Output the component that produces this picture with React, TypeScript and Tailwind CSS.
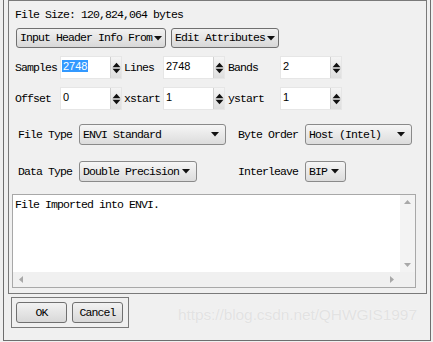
import React from "react";

const mono = { fontFamily: '"Liberation Mono", "DejaVu Sans Mono", monospace' };

function Caret() {
  return (
    <svg width="8" height="5" viewBox="0 0 8 5" className="shrink-0">
      <polygon points="0,0 8,0 4,4.5" fill="#111" />
    </svg>
  );
}

function Spin() {
  return (
    <div className="w-[11px] h-full flex items-center justify-center bg-gradient-to-b from-[#f4f4f4] to-[#dedede] border-l border-[#d0d0d0]">
      <svg width="9" height="12" viewBox="0 0 9 12">
        <polygon points="0.5,5.3 4.5,0.8 8.5,5.3" fill="#111" />
        <polygon points="0.5,6.7 4.5,11.2 8.5,6.7" fill="#111" />
      </svg>
    </div>
  );
}

function NumField({ value, selected }: { value: string; selected?: boolean }) {
  return (
    <div className="w-[62px] h-[23px] flex bg-white border border-[#e6e6e6]">
      <div
        className="flex-1 pl-[1px] pt-[3px] text-[11px] leading-[13px] text-black"
        style={{ fontFamily: '"Liberation Sans", Arial, sans-serif' }}
      >
        <span className={selected ? "bg-[#3399ff] text-white px-[1px]" : "px-[1px]"}>{value}</span>
      </div>
      <Spin />
    </div>
  );
}

function Select({ value, w }: { value: string; w: string }) {
  return (
    <div
      className={`${w} h-[21px] flex items-center justify-between pl-[3px] pr-[6px] rounded-[3px] border border-[#8a8a8a] bg-gradient-to-b from-[#f6f6f6] to-[#dcdcdc]`}
    >
      <span className="text-[11.5px] tracking-[-0.9px] text-black whitespace-nowrap">{value}</span>
      <Caret />
    </div>
  );
}

function Label({ text, w, pl = "" }: { text: string; w: string; pl?: string }) {
  return (
    <div className={`${w} ${pl} shrink-0 text-[11.5px] tracking-[-0.9px] text-black whitespace-nowrap`}>{text}</div>
  );
}

function Btn({ children, w }: { children: React.ReactNode; w: string }) {
  return (
    <div
      className={`${w} h-[20px] flex items-center justify-center gap-[2px] rounded-[3px] border border-[#707070] bg-gradient-to-b from-[#f2f2f2] to-[#d8d8d8] text-[11.5px] tracking-[-0.9px] text-black whitespace-nowrap`}
    >
      {children}
    </div>
  );
}

export default function App() {
  return (
    <div className="relative w-[433px] h-[342px] overflow-hidden bg-[#f0f0f0] pl-[3px]" style={mono}>
      <div className="w-[428px] h-[341px] border-l border-r border-b border-[#6e6e6e] pl-[4px]">
        {/* main frame */}
        <div className="w-[419px] h-[294px] border border-[#7a7a7a] flex flex-col">
          <div className="mt-[6px] h-[15px] leading-[15px] pl-[6px] text-[11.5px] tracking-[-0.9px] text-black">
            File Size: 120,824,064 bytes
          </div>

          <div className="mt-[6px] flex gap-[5px] pl-[7px]">
            <Btn w="w-[150px]">
              Input Header Info From
              <Caret />
            </Btn>
            <Btn w="w-[108px]">
              Edit Attributes
              <Caret />
            </Btn>
          </div>

          <div className="mt-[8px] flex items-center pl-[6px] h-[23px]">
            <Label text="Samples" w="w-[45px]" />
            <NumField value="2748" selected />
            <Label text="Lines" w="w-[41px]" pl="pl-[2px]" />
            <NumField value="2748" />
            <Label text="Bands" w="w-[55px]" pl="pl-[3px]" />
            <NumField value="2" />
          </div>

          <div className="mt-[8px] flex items-center pl-[6px] h-[23px]">
            <Label text="Offset" w="w-[45px]" />
            <NumField value="0" />
            <Label text="xstart" w="w-[41px]" pl="pl-[2px]" />
            <NumField value="1" />
            <Label text="ystart" w="w-[55px]" pl="pl-[3px]" />
            <NumField value="1" />
          </div>

          <div className="mt-[14px] flex items-center pl-[9px]">
            <Label text="File Type" w="w-[61px]" />
            <Select value="ENVI Standard" w="w-[147px]" />
            <Label text="Byte Order" w="w-[67px]" pl="pl-[12px] box-content" />
            <Select value="Host (Intel)" w="w-[107px]" />
          </div>

          <div className="mt-[16px] flex items-center pl-[9px]">
            <Label text="Data Type" w="w-[61px]" />
            <Select value="Double Precision" w="w-[118px]" />
            <Label text="Interleave" w="w-[67px]" pl="pl-[41px] box-content" />
            <Select value="BIP" w="w-[41px]" />
          </div>

          {/* message area */}
          <div className="mt-[12px] ml-[3px] w-[404px] h-[94px] border border-[#a8a8a8] grid grid-cols-[1fr_15px] grid-rows-[1fr_15px]">
            <div className="bg-white pl-[2px] pt-[3px] text-[11.5px] tracking-[-0.9px] leading-[14px] text-black">
              File Imported into ENVI.
            </div>
            <div className="bg-[#f3f3f3] flex flex-col items-center justify-between py-[5px]">
              <svg width="7" height="4" viewBox="0 0 7 4">
                <polygon points="0,4 3.5,0 7,4" fill="#a8a8a8" />
              </svg>
              <svg width="7" height="4" viewBox="0 0 7 4">
                <polygon points="0,0 3.5,4 7,0" fill="#a8a8a8" />
              </svg>
            </div>
            <div className="bg-[#f0f0f0] flex items-center justify-between px-[6px]">
              <svg width="4" height="7" viewBox="0 0 4 7">
                <polygon points="4,0 0,3.5 4,7" fill="#a8a8a8" />
              </svg>
              <svg width="4" height="7" viewBox="0 0 4 7">
                <polygon points="0,0 4,3.5 0,7" fill="#a8a8a8" />
              </svg>
            </div>
            <div className="bg-[#f0f0f0]" />
          </div>
        </div>

        {/* dialog buttons */}
        <div className="mt-[3px] ml-[3px] w-[118px] h-[31px] border border-[#7a7a7a] flex gap-[5px] pl-[4px] pt-[4px]">
          <Btn w="w-[51px] h-[21px]">OK</Btn>
          <Btn w="w-[51px] h-[21px]">Cancel</Btn>
        </div>
      </div>

      {/* watermark */}
      <div
        className="absolute left-[178px] top-[303px] text-[15.5px] leading-[24px] tracking-[-0.1px] text-[#e2e2e2] whitespace-nowrap"
        style={{ fontFamily: '"Liberation Sans", Arial, sans-serif', textShadow: "0 0 1px #fafafa" }}
      >
        https://blog.csdn.net/QHWGIS1997
      </div>
    </div>
  );
}
